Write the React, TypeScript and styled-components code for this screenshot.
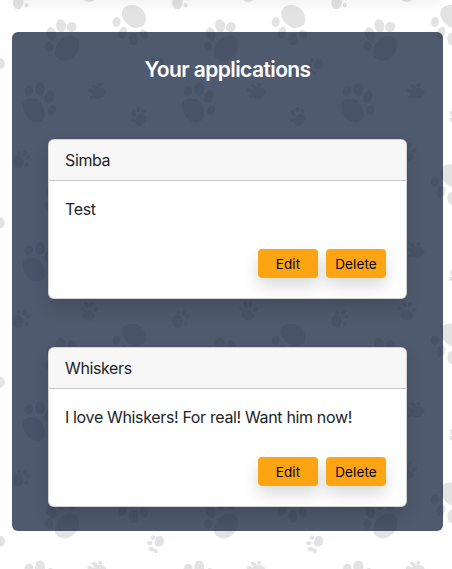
import React from "react";
import styled, { createGlobalStyle } from "styled-components";

const GlobalStyle = createGlobalStyle`
  * { box-sizing: border-box; }
  html, body { margin: 0; background: #fff; overflow: hidden; }
  body { font-family: Inter, "Liberation Sans", sans-serif; color: #212529; }
`;

const Page = styled.main`
  position: relative;
  isolation: isolate;
  width: 452px;
  height: 569px;
  padding: 32px 9px 0 12px;
  overflow: hidden;
`;

const Backdrop = styled.svg`
  position: absolute;
  inset: 0;
  z-index: -2;
  width: 100%;
  height: 100%;
`;

const TopShadow = styled.div`
  position: absolute;
  z-index: -1;
  left: 12px;
  right: 9px;
  top: -40px;
  height: 40px;
  box-shadow: 0 4px 12px rgba(0, 0, 0, 0.06);
`;

const Panel = styled.section`
  height: 499px;
  padding: 24px 36px;
  border-radius: 6px;
  background: rgba(20, 35, 61, 0.75);
`;

const Title = styled.h1`
  margin: 0 0 56px;
  font-size: 21px;
  line-height: 27px;
  font-weight: 600;
  letter-spacing: -0.58px;
  text-align: center;
  color: #fff;
`;

const CardList = styled.div`
  display: flex;
  flex-direction: column;
  gap: 48px;
`;

const Card = styled.article`
  height: 160px;
  display: flex;
  flex-direction: column;
  border: 1px solid rgba(0, 0, 0, 0.175);
  border-radius: 6px;
  background: #fff;
  box-shadow: 0 8px 16px rgba(0, 0, 0, 0.15);
`;

const CardHeader = styled.header`
  height: 41px;
  padding: 8px 16px;
  border-bottom: 1px solid #c9cacc;
  border-radius: 5px 5px 0 0;
  background: #f7f7f7;
  font-size: 16px;
  line-height: 24px;
  letter-spacing: -0.38px;
`;

const CardBody = styled.div`
  flex: 1;
  display: flex;
  flex-direction: column;
  justify-content: space-between;
  padding: 16px 20px 20px 16px;
`;

const Message = styled.p`
  margin: 0;
  font-size: 16px;
  line-height: 24px;
  letter-spacing: -0.35px;
`;

const Actions = styled.div`
  display: flex;
  justify-content: flex-end;
  gap: 8px;
`;

const Button = styled.button`
  width: 60px;
  height: 29px;
  padding: 2px 0 0;
  border: 0;
  border-radius: 4px;
  background: #fda413;
  color: #000;
  font: 400 13.5px/27px Inter, "Liberation Sans", sans-serif;
  letter-spacing: 0.1px;
  box-shadow: 0 8px 16px rgba(0, 0, 0, 0.15);
`;

const TILE = 159.2;

type Toe = [cx: number, cy: number, rx: number, ry: number, angle: number];

const pads = [
  "M122 14C122 8 126 5 132 5C141 5 147 13 146 21C145 27 139 28 134 28C128 26 122 20 122 14Z",
  "M55 52C56 43 61 37 69 36C76 35 80 40 79 47C78 55 71 61 64 61C58 60 54 57 55 52Z",
  "M23 106C22 100 27 98 33 99C38 98 41 101 43 107C46 113 46 119 40 122C33 125 23 117 23 106Z",
  "M155 63C156 58 159 57 162 59C166 63 164 69 159 69C155 69 154 66 155 63Z",
  "M92 93C93 88 98 86 103 88C108 90 107 95 102 98C97 100 91 98 92 93Z",
  "M136 118C138 114 143 112 146 116C147 121 143 126 139 126C135 125 134 122 136 118Z",
  "M13 3C13 -3 17 -5 21 -3C25 -1 24 7 20 9C16 10 13 7 13 3Z",
  "M82 155C83 151 88 149 91 152C95 154 97 158 93 160C88 163 82 160 82 155Z",
];

const toes: Toe[] = [
  [116.5, 22, 4, 5, 10],
  [122.7, 32.8, 4, 6.2, 22],
  [133.5, 39, 4.6, 6.5, 0],
  [144, 34.5, 3.8, 5.2, -25],
  [61, 25.7, 5, 6.5, -12],
  [71.7, 27, 4.8, 5.2, 35],
  [51.5, 34, 4.8, 6.8, -18],
  [49, 46.5, 4, 5, -10],
  [28.8, 91, 4.3, 5, 25],
  [40, 89.3, 5, 6.5, 0],
  [49.5, 97, 4.5, 6.8, 18],
  [52, 110, 4, 5, 20],
  [153, 60, 2.3, 2.3, 0],
  [149.7, 65.5, 2.7, 2.2, 0],
  [151.5, 71.5, 3, 2.2, 12],
  [155.7, 73.5, 2, 2.2, -30],
  [90.5, 90.5, 3.2, 1.8, 15],
  [94.5, 86.5, 3.1, 1.8, 30],
  [100, 85, 2.2, 1.9, -15],
  [91.7, 96.7, 2.4, 1.6, -20],
  [133, 119.7, 2.2, 2.2, 0],
  [133.8, 113.7, 2.1, 3.1, -15],
  [138.3, 109.5, 2, 2.8, 10],
  [143.2, 111.2, 2.6, 2, 25],
  [19, -6, 2, 2.1, 20],
  [24.8, -5.8, 2.2, 3.4, 20],
  [28, -1.8, 2, 2.6, 65],
  [26.4, 5.3, 2, 2.2, 0],
  [82.3, 149.3, 2.4, 1.9, 20],
  [86.3, 145.4, 1.9, 3, -15],
  [91.3, 145.6, 1.9, 3, 15],
  [96, 150.4, 2.5, 2, -35],
];

function PawPrints() {
  return (
    <g fill="#e3e3e3">
      {pads.map((d) => (
        <path key={d} d={d} />
      ))}
      {toes.map(([cx, cy, rx, ry, angle]) => (
        <ellipse
          key={`${cx}-${cy}`}
          cx={cx}
          cy={cy}
          rx={rx}
          ry={ry}
          transform={`rotate(${angle} ${cx} ${cy})`}
        />
      ))}
    </g>
  );
}

const offsets = [-1, 0, 1, 2, 3];

function PawBackdrop() {
  return (
    <Backdrop aria-hidden="true">
      {offsets.flatMap((row) =>
        offsets.map((col) => (
          <g key={`${row}:${col}`} transform={`translate(${col * TILE} ${row * TILE})`}>
            <PawPrints />
          </g>
        )),
      )}
    </Backdrop>
  );
}

const applications = [
  { pet: "Simba", message: "Test" },
  { pet: "Whiskers", message: "I love Whiskers! For real! Want him now!" },
];

export default function App() {
  return (
    <>
      <GlobalStyle />
      <Page>
        <PawBackdrop />
        <TopShadow />
        <Panel>
          <Title>Your applications</Title>
          <CardList>
            {applications.map(({ pet, message }) => (
              <Card key={pet}>
                <CardHeader>{pet}</CardHeader>
                <CardBody>
                  <Message>{message}</Message>
                  <Actions>
                    <Button type="button">Edit</Button>
                    <Button type="button">Delete</Button>
                  </Actions>
                </CardBody>
              </Card>
            ))}
          </CardList>
        </Panel>
      </Page>
    </>
  );
}
